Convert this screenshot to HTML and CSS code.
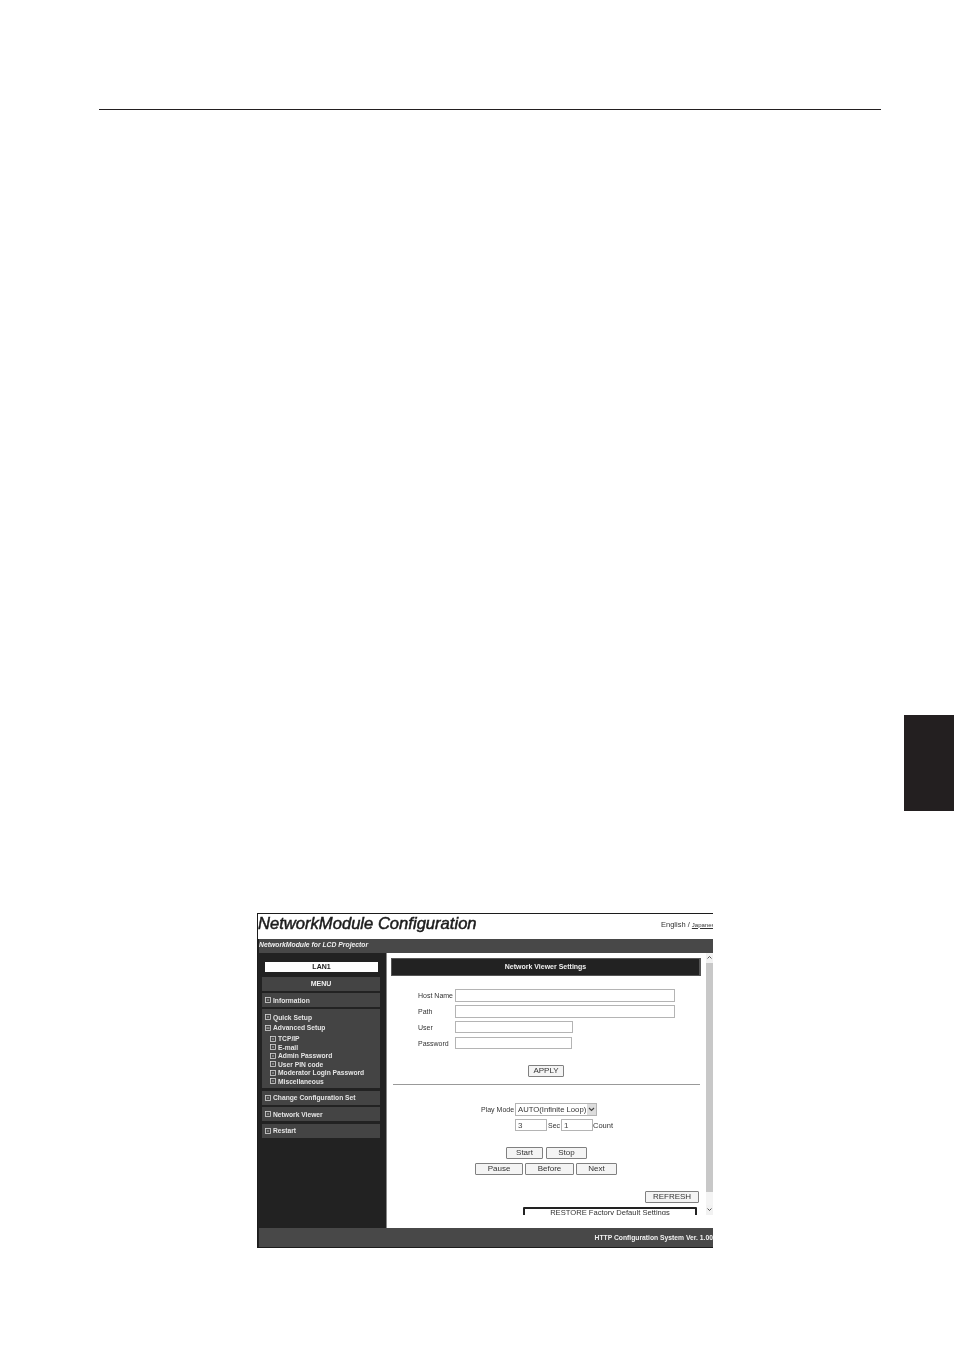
FILE: index.html
```html
<!DOCTYPE html>
<html lang="en">
<head>
<meta charset="utf-8">
<title>NetworkModule Configuration</title>
<link rel="stylesheet" href="styles.css">
</head>
<body>
<svg class="defs" width="0" height="0" aria-hidden="true">
  <symbol id="box-dot" viewBox="0 0 6 6"><rect x=".5" y=".5" width="5" height="5" fill="none" stroke="#d8d8d8" stroke-width=".8"/><rect x="2.4" y="2.4" width="1.2" height="1.2" fill="#d8d8d8"/></symbol>
  <symbol id="box-minus" viewBox="0 0 6 6"><rect x=".5" y=".5" width="5" height="5" fill="none" stroke="#d8d8d8" stroke-width=".8"/><rect x="1.4" y="2.6" width="3.2" height=".9" fill="#d8d8d8"/></symbol>
</svg>
<div class="page">
  <div class="rule"></div>
  <div class="tab"></div>
  <div class="shot">
    <header class="title-row">
      <h1 class="app-title">NetworkModule Configuration</h1>
      <div class="lang">English / <a class="lang-link">Japanese</a></div>
    </header>
    <div class="sub-bar">NetworkModule for LCD Projector</div>
    <div class="body-row">
      <nav class="sidebar">
        <div class="lan">LAN1</div>
        <div class="menu-head">MENU</div>
        <div class="menu-card c-info"><svg class="ico"><use href="#box-dot"/></svg>Information</div>
        <div class="menu-group">
          <div class="menu-line"><svg class="ico"><use href="#box-dot"/></svg>Quick Setup</div>
          <div class="menu-line"><svg class="ico"><use href="#box-minus"/></svg>Advanced Setup</div>
          <div class="submenu">
            <div class="sub-line"><svg class="ico"><use href="#box-dot"/></svg>TCP/IP</div>
            <div class="sub-line"><svg class="ico"><use href="#box-dot"/></svg>E-mail</div>
            <div class="sub-line"><svg class="ico"><use href="#box-dot"/></svg>Admin Password</div>
            <div class="sub-line"><svg class="ico"><use href="#box-dot"/></svg>User PIN code</div>
            <div class="sub-line"><svg class="ico"><use href="#box-dot"/></svg>Moderator Login Password</div>
            <div class="sub-line"><svg class="ico"><use href="#box-dot"/></svg>Miscellaneous</div>
          </div>
        </div>
        <div class="menu-card"><svg class="ico"><use href="#box-dot"/></svg>Change Configuration Set</div>
        <div class="menu-card"><svg class="ico"><use href="#box-dot"/></svg>Network Viewer</div>
        <div class="menu-card"><svg class="ico"><use href="#box-dot"/></svg>Restart</div>
      </nav>
      <main class="main">
        <div class="scroll-row">
          <div class="content">
            <div class="panel-title">Network Viewer Settings</div>
            <div class="form">
              <label class="f-row"><span class="f-label">Host Name</span><input class="in in-long" type="text"></label>
              <label class="f-row"><span class="f-label">Path</span><input class="in in-long" type="text"></label>
              <label class="f-row r-user"><span class="f-label">User</span><input class="in in-user" type="text"></label>
              <label class="f-row r-pass"><span class="f-label">Password</span><input class="in in-pass" type="text"></label>
            </div>
            <div class="apply-row"><button class="btn b-apply">APPLY</button></div>
            <hr class="divider">
            <div class="play-row">
              <span class="play-label">Play Mode</span>
              <div class="fake-select"><span class="sel-text">AUTO(Infinite Loop)</span>
                <span class="sel-arrow"><svg width="9" height="11" viewBox="0 0 9 11"><path d="M2 4l2.5 2.5L7 4" fill="none" stroke="#444" stroke-width="1.2"/></svg></span>
              </div>
            </div>
            <div class="time-row">
              <input class="in in-num" type="text" value="3"><span class="unit u-sec">Sec</span>
              <input class="in in-num" type="text" value="1"><span class="unit u-count">Count</span>
            </div>
            <div class="ctl-row r1"><button class="btn b-start">Start</button><button class="btn b-stop">Stop</button></div>
            <div class="ctl-row r2"><button class="btn b-pause">Pause</button><button class="btn b-before">Before</button><button class="btn b-next">Next</button></div>
            <div class="refresh-row"><button class="btn b-refresh">REFRESH</button></div>
            <div class="restore-row"><button class="btn b-restore">RESTORE Factory Default Settings</button></div>
          </div>
          <div class="scrollbar">
            <span class="sb-btn"><svg width="7" height="9" viewBox="0 0 7 9"><path d="M1.5 5.5L3.5 3.5 5.5 5.5" fill="none" stroke="#555"/></svg></span>
            <span class="sb-track"></span>
            <span class="sb-gap"></span>
            <span class="sb-btn"><svg width="7" height="9" viewBox="0 0 7 9"><path d="M1.5 3.5L3.5 5.5 5.5 3.5" fill="none" stroke="#555"/></svg></span>
          </div>
        </div>
      </main>
    </div>
    <footer class="foot">HTTP Configuration System Ver. 1.00</footer>
  </div>
</div>
</body>
</html>
```
FILE: styles.css
```css
* { box-sizing: border-box; }
html, body { margin: 0; padding: 0; background: #fff; }
.defs { position: absolute; }
.page { height: 1351px; overflow: hidden; padding-top: 109px; font-family: "Liberation Sans", Arial, sans-serif; }
.rule { margin-left: 99px; width: 782px; height: 1px; background: #231f20; }
.tab { margin: 605px 0 0 904px; width: 50px; height: 96px; background: #231f20; }

.shot { margin: 102px 0 0 257px; width: 456px; height: 335px; border-top: 1px solid #1c1c1c; border-left: 1px solid #1c1c1c; border-bottom: 1px solid #1c1c1c; background: #222; display: flex; flex-direction: column; overflow: hidden; filter: grayscale(1) blur(.3px); }

.title-row { height: 25px; background: #fff; display: flex; align-items: center; justify-content: space-between; white-space: nowrap; }
.app-title { margin: 0 0 5px; font-size: 16.6px; line-height: 20px; font-weight: 400; font-style: italic; color: #1c1c1c; -webkit-text-stroke: .5px #1c1c1c; }
.lang { font-size: 7.5px; color: #333; width: 53px; margin: 0 -1px 5px 0; overflow: hidden; flex: none; }
.lang-link { font-size: 6px; text-decoration: underline; }

.sub-bar { height: 14px; margin-left: 1px; background: #484848; color: #f0f0f0; font-size: 6.8px; line-height: 11px; font-weight: 700; font-style: italic; white-space: nowrap; }

.body-row { height: 275px; display: flex; }
.sidebar { width: 129px; flex: none; background: #222; border-right: 1px solid #888; padding: 9px 6px 0 4px; color: #e4e4e4; font-size: 6.7px; font-weight: 700; white-space: nowrap; }
.lan { margin: 0 2px 5px 3px; height: 10px; background: #fff; color: #222; text-align: center; line-height: 10px; font-size: 7px; }
.menu-head { height: 14px; margin-bottom: 2px; background: #444; text-align: center; line-height: 14px; color: #f0f0f0; font-size: 7px; }
.menu-card { height: 14px; margin-bottom: 2.5px; background: #444; display: flex; align-items: center; gap: 2px; padding-left: 3px; }
.c-info { margin-bottom: 2px; }
.menu-group { height: 79px; margin-bottom: 2.5px; background: #444; padding: 3px 0 0 3px; }
.menu-line { display: flex; align-items: center; gap: 2px; height: 10.5px; }
.submenu { margin: 1.25px 0 0 5px; }
.sub-line { display: flex; align-items: center; gap: 2px; height: 8.5px; }
.ico { width: 6px; height: 6px; flex: none; }

.main { flex: 1; min-width: 0; background: #fff; }
.scroll-row { height: 262px; display: flex; overflow: hidden; }
.content { flex: 1; min-width: 0; padding: 5px 0 0 4px; color: #333; font-size: 7px; overflow: hidden; }
.panel-title { width: 310px; height: 18px; background: #222; border: 1px solid #555; border-width: 1px 2px 1px 1px; color: #f0f0f0; font-weight: 700; text-align: center; line-height: 15px; }
.form { margin-top: 13px; padding-left: 27px; display: flex; flex-direction: column; gap: 3px; }
.f-row { display: flex; align-items: center; }
.r-pass { margin-top: 1px; }
.f-label { width: 37px; flex: none; }
.in { border: 1px solid #b4b4b4; background: #fff; padding: 0 2px; margin: 0; font: 8px "Liberation Sans", Arial, sans-serif; color: #444; border-radius: 0; outline: 0; }
.in-long { width: 220px; height: 13px; }
.in-user { width: 118px; height: 12px; }
.in-pass { width: 117px; height: 12px; }
.btn { display: block; margin: 0; padding: 0 0 2px; background: #f4f4f4; border: 1px solid #808080; border-radius: 1px; font: 8px "Liberation Sans", Arial, sans-serif; color: #333; height: 12px; white-space: nowrap; }
.apply-row { margin-top: 16px; padding-left: 137px; }
.b-apply { width: 36px; }
.divider { margin: 7px 0 0 2px; width: 307px; height: 1px; border: 0; background: #999; }
.play-row { margin-top: 18px; padding-left: 90px; display: flex; align-items: center; gap: 2px; }
.play-label { width: 32px; white-space: nowrap; }
.fake-select { width: 82px; height: 13px; border: 1px solid #b4b4b4; display: flex; align-items: center; justify-content: space-between; font-size: 7.7px; padding-left: 2px; white-space: nowrap; }
.sel-arrow { width: 9px; height: 11px; background: #ddd; display: block; }
.sel-arrow svg { display: block; }
.time-row { margin-top: 3px; padding-left: 124px; display: flex; align-items: center; }
.in-num { width: 32px; height: 12px; }
.unit { padding-top: 1px; }
.u-sec { width: 14px; padding-left: 1px; }
.u-count { font-size: 7.5px; }
.ctl-row { display: flex; }
.r1 { margin-top: 16px; padding-left: 115px; gap: 3px; }
.r2 { margin-top: 4px; padding-left: 84px; gap: 2px; }
.b-start { width: 37px; }
.b-stop { width: 41px; }
.b-pause { width: 48px; }
.b-before { width: 49px; }
.b-next { width: 41px; }
.refresh-row { margin-top: 16px; padding-left: 254px; }
.b-refresh { width: 54px; }
.restore-row { margin-top: 4px; padding-left: 132px; }
.b-restore { width: 174px; height: 14px; border: 2px solid #222; background: #fff; font-size: 7.6px; line-height: 8px; }

.scrollbar { width: 7px; flex: none; display: flex; flex-direction: column; background: #eee; }
.sb-btn { height: 10px; background: #f2f2f2; display: block; }
.sb-btn svg { display: block; }
.sb-track { height: 229px; background: #c8c8c8; }
.sb-gap { flex: 1; background: #f4f4f4; }

.foot { height: 19px; margin-left: 1px; background: #484848; color: #f0f0f0; font-size: 6.75px; font-weight: 700; line-height: 20px; text-align: right; white-space: nowrap; overflow: hidden; }
```
